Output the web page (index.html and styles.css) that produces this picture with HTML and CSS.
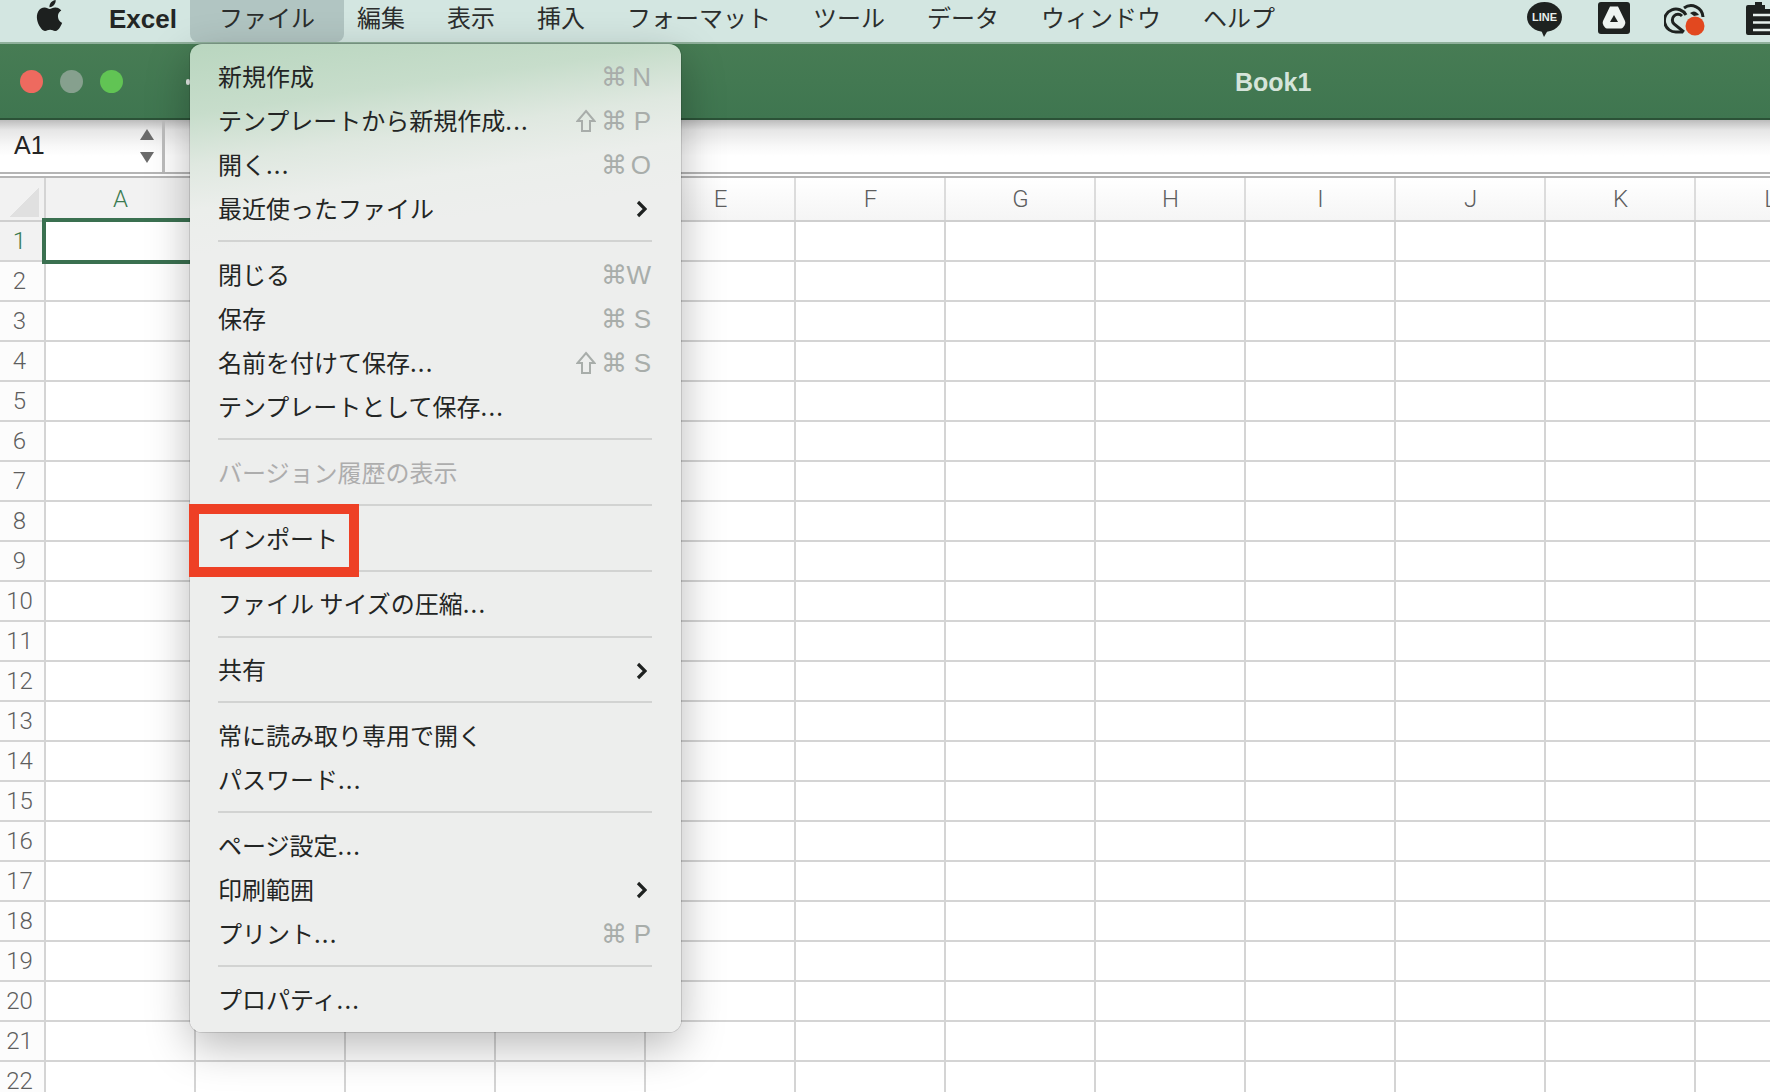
FILE: index.html
```html
<!DOCTYPE html>
<html lang="ja">
<head>
<meta charset="utf-8">
<title>Excel</title>
<link rel="stylesheet" href="styles.css">
</head>
<body>
<div class="screen">
  <header class="menubar">
    <svg class="apple" viewBox="0 0 24 24"><path d="M12.152 6.896c-.948 0-2.415-1.078-3.96-1.04-2.04.027-3.91 1.183-4.961 3.014-2.117 3.675-.546 9.103 1.519 12.09 1.013 1.454 2.208 3.09 3.792 3.039 1.52-.065 2.09-.987 3.935-.987 1.831 0 2.35.987 3.96.948 1.637-.026 2.676-1.48 3.676-2.948 1.156-1.688 1.636-3.325 1.662-3.415-.039-.013-3.182-1.221-3.22-4.857-.026-3.04 2.48-4.494 2.597-4.559-1.429-2.09-3.623-2.324-4.39-2.376-2-.156-3.675 1.09-4.61 1.09zM15.53 3.83c.843-1.012 1.4-2.427 1.245-3.83-1.207.052-2.662.805-3.532 1.818-.78.896-1.454 2.338-1.273 3.714 1.338.104 2.715-.688 3.559-1.701"/></svg>
    <span class="app-name">Excel</span>
    <nav class="menus">
      <span class="menu-title active">ファイル</span>
      <span class="menu-title">編集</span>
      <span class="menu-title">表示</span>
      <span class="menu-title">挿入</span>
      <span class="menu-title">フォーマット</span>
      <span class="menu-title">ツール</span>
      <span class="menu-title">データ</span>
      <span class="menu-title">ウィンドウ</span>
      <span class="menu-title">ヘルプ</span>
    </nav>
    <div class="status">
      <span class="line-icon"><span class="line-text">LINE</span><span class="line-tail"></span></span>
      <svg class="drive" viewBox="0 0 32 32"><rect width="32" height="32" rx="3" fill="#1e2220"/><path d="M12 4.500h8l7 14.500q1 2-.5 4.500l-1.500 2q-.8 1-2 1H9q-1.200 0-2-1l-1.500-2q-1.500-2.500-.5-4.500z" fill="#eef4f1"/><path d="M16 13l4 7h-8z" fill="#1e2220"/></svg>
      <svg class="cloud" viewBox="0 0 42 36"><g fill="none" stroke="#1e2220" stroke-width="3"><path d="M22 14A11.500 11.500 0 1 0 13 31H19"/><path d="M20 31L10 23A5.500 5.500 0 0 1 18 15"/><path d="M20 7A12 12 0 0 1 39 16"/></g><path d="M26 12Q31 8 35 14L30 15z" fill="#1e2220"/><circle cx="31" cy="25" r="9.500" fill="#e2481f"/></svg>
      <svg class="clip" viewBox="0 0 24 33"><path d="M6 3h3V0h7v3h3v4H24v26H2q-2 0-2-2V5q0-2 2-2h4z" fill="#1e2220"/><path d="M7 13h17M7 20.500h17M7 28h17" stroke="#e6efec" stroke-width="2.500"/></svg>
    </div>
  </header>

  <section class="titlebar">
    <div class="lights">
      <span class="light red"></span>
      <span class="light gray"></span>
      <span class="light green"></span>
    </div>
    <span class="toolbar-dot"></span>
    <h1 class="doc-title">Book1</h1>
  </section>

  <section class="formula">
    <div class="name-box">
      <span class="name-value">A1</span>
      <span class="spinner"><span class="up"></span><span class="down"></span></span>
    </div>
  </section>

  <section class="sheet">
    <div class="col-heads">
      <div class="corner"><span class="corner-mark"></span></div>
      <div class="col-head current">A</div>
      <div class="col-head">B</div>
      <div class="col-head">C</div>
      <div class="col-head">D</div>
      <div class="col-head">E</div>
      <div class="col-head">F</div>
      <div class="col-head">G</div>
      <div class="col-head">H</div>
      <div class="col-head">I</div>
      <div class="col-head">J</div>
      <div class="col-head">K</div>
      <div class="col-head">L</div>
    </div>
    <div class="body-area">
      <div class="row-heads">
        <div class="row-head current">1</div>
        <div class="row-head">2</div>
        <div class="row-head">3</div>
        <div class="row-head">4</div>
        <div class="row-head">5</div>
        <div class="row-head">6</div>
        <div class="row-head">7</div>
        <div class="row-head">8</div>
        <div class="row-head">9</div>
        <div class="row-head">10</div>
        <div class="row-head">11</div>
        <div class="row-head">12</div>
        <div class="row-head">13</div>
        <div class="row-head">14</div>
        <div class="row-head">15</div>
        <div class="row-head">16</div>
        <div class="row-head">17</div>
        <div class="row-head">18</div>
        <div class="row-head">19</div>
        <div class="row-head">20</div>
        <div class="row-head">21</div>
        <div class="row-head">22</div>
      </div>
      <div class="cells"><div class="selection"></div></div>
    </div>
  </section>

  <div class="dropdown">
    <div class="item"><span>新規作成</span><span class="keys"><i>⌘</i><b>N</b></span></div>
    <div class="item"><span>テンプレートから新規作成<em>...</em></span><span class="keys"><svg class="shift" viewBox="0 0 20 24"><path d="M10 2L18.500 12H14V22H6V12H1.500z"/></svg><i>⌘</i><b>P</b></span></div>
    <div class="item"><span>開く<em>...</em></span><span class="keys"><i>⌘</i><b>O</b></span></div>
    <div class="item"><span>最近使ったファイル</span><svg class="chev" viewBox="0 0 11 18"><path d="M2 2l7 7-7 7" /></svg></div>
    <div class="sep"></div>
    <div class="item"><span>閉じる</span><span class="keys"><i>⌘</i><b>W</b></span></div>
    <div class="item"><span>保存</span><span class="keys"><i>⌘</i><b>S</b></span></div>
    <div class="item"><span>名前を付けて保存<em>...</em></span><span class="keys"><svg class="shift" viewBox="0 0 20 24"><path d="M10 2L18.500 12H14V22H6V12H1.500z"/></svg><i>⌘</i><b>S</b></span></div>
    <div class="item"><span>テンプレートとして保存<em>...</em></span></div>
    <div class="sep"></div>
    <div class="item disabled"><span>バージョン履歴の表示</span></div>
    <div class="sep"></div>
    <div class="item"><span>インポート</span></div>
    <div class="sep"></div>
    <div class="item"><span>ファイル サイズの圧縮<em>...</em></span></div>
    <div class="sep"></div>
    <div class="item"><span>共有</span><svg class="chev" viewBox="0 0 11 18"><path d="M2 2l7 7-7 7" /></svg></div>
    <div class="sep"></div>
    <div class="item"><span>常に読み取り専用で開く</span></div>
    <div class="item"><span>パスワード<em>...</em></span></div>
    <div class="sep"></div>
    <div class="item"><span>ページ設定<em>...</em></span></div>
    <div class="item"><span>印刷範囲</span><svg class="chev" viewBox="0 0 11 18"><path d="M2 2l7 7-7 7" /></svg></div>
    <div class="item"><span>プリント<em>...</em></span><span class="keys"><i>⌘</i><b>P</b></span></div>
    <div class="sep"></div>
    <div class="item"><span>プロパティ<em>...</em></span></div>
    <div class="callout"></div>
  </div>
</div>
</body>
</html>
```
FILE: styles.css
```css
* { box-sizing: border-box; }
html, body { margin: 0; padding: 0; }
body { background: #fff; font-family: "Noto Sans CJK JP", "Liberation Sans", sans-serif; }
.screen { position: relative; width: 1770px; height: 1092px; overflow: hidden; }

/* menu bar */
.menubar { display: flex; align-items: center; height: 44px; padding-left: 38px; background: #d3e6e1; border-bottom: 2px solid #8fb09b; color: #1f2221; position: relative; }
.apple { width: 31px; height: 33px; margin: -11px 0 0 -4px; flex: none; fill: #1d201f; }
.app-name { font: bold 26px "Liberation Sans", sans-serif; margin: 0 0 4px 44px; color: #232625; width: 81px; }
.menus { display: flex; align-self: stretch; }
.menu-title { display: flex; align-items: center; padding: 0 21px 9px; font-size: 24px; line-height: 1; white-space: nowrap; color: #2b2e2d; }
.menu-title.active { padding: 0 29px 9px; margin-right: -8px; background: #b1c5c2; border-radius: 0 0 8px 8px; height: 42px; }
.status { margin-left: auto; display: flex; align-items: flex-start; align-self: flex-start; }
.line-icon { position: relative; width: 35px; height: 30px; margin-top: 2px; margin-right: 36px; background: #1e2220; border-radius: 50%; display: flex; align-items: center; justify-content: center; }
.line-text { font: bold 11px "Liberation Sans", sans-serif; color: #e8efec; }
.line-tail { position: absolute; left: 14px; bottom: -5px; border-left: 3px solid transparent; border-right: 4px solid transparent; border-top: 7px solid #1e2220; }
.drive { width: 32px; height: 32px; margin-top: 2px; margin-right: 34px; }
.cloud { width: 42px; height: 36px; margin-top: 1px; margin-right: 40px; }
.clip { width: 24px; height: 33px; margin-top: 2px; flex: none; }

/* title bar */
.titlebar { position: relative; display: flex; align-items: center; height: 76px; padding: 2px 0 0 20px; background: linear-gradient(#477c54, #3f7650); border-bottom: 2px solid #2b5237; }
.lights { display: flex; gap: 17px; margin-bottom: 1px; }
.light { width: 23px; height: 23px; border-radius: 50%; }
.red { background: #ee6a5f; }
.gray { background: #86a08e; }
.green { background: #61c454; }
.toolbar-dot { width: 4px; height: 6px; margin-left: 63px; background: #e6ebe7; border-radius: 2px; }
.doc-title { margin: 0 0 0 1045px; font: bold 25px "Liberation Sans", sans-serif; color: #d5e4da; }

/* formula bar */
.formula { display: flex; height: 52px; background: linear-gradient(#bcbcbc, #e6e6e6 10px, #f8f8f8 26px, #fff 36px); }
.name-box { display: flex; align-items: center; justify-content: space-between; width: 165px; height: 52px; padding: 0 8px 0 14px; border-right: 3px solid #bdbdbd; }
.name-value { font: 25px "Liberation Sans", sans-serif; color: #242424; margin-bottom: 2px; }
.spinner { display: flex; flex-direction: column; gap: 12px; }
.up, .down { width: 0; height: 0; border-left: 7px solid transparent; border-right: 7px solid transparent; }
.up { border-bottom: 11px solid #6b6b6b; }
.down { border-top: 11px solid #6b6b6b; }

/* sheet */
.sheet { border-top: 2px solid #b5b5b5; padding-top: 2px; }
.col-heads { display: flex; height: 46px; background: linear-gradient(#fff, #f5f5f5); border-top: 2px solid #b5b5b5; border-bottom: 2px solid #cfcfcf; overflow: hidden; }
.corner { flex: none; display: flex; justify-content: flex-end; align-items: flex-end; width: 46px; padding: 0 5px 3px 0; border-right: 2px solid #d4d4d4; background: #f2f2f2; }
.corner-mark { width: 29px; height: 30px; background: linear-gradient(to bottom right, transparent 50%, #e0e0e0 50%); }
.col-head { flex: none; display: flex; justify-content: center; align-items: center; width: 150px; padding-left: 1px; border-right: 2px solid #dcdcdc; font: 300 24px Roboto, "Liberation Sans", sans-serif; color: #5e5e5e; }
.col-head.current { color: #3a7a50; background: #f2f2f2; }
.body-area { display: flex; }
.row-heads { flex: none; width: 46px; border-right: 2px solid #d4d4d4; background: repeating-linear-gradient(#fcfcfc 0 38px, #d4d4d4 38px 40px); }
.row-head { height: 40px; padding: 0 5px 2px 0; display: flex; align-items: center; justify-content: center; font: 300 24px Roboto, "Liberation Sans", sans-serif; color: #5e5e5e; }
.row-head.current { color: #3a7a50; background: linear-gradient(#f2f2f2 38px, transparent 38px); }
.cells { position: relative; flex: 1; height: 880px; background-image: linear-gradient(to right, transparent 148px, #d4d4d4 148px), linear-gradient(transparent 38px, #d4d4d4 38px); background-size: 150px 40px; }
.selection { position: absolute; left: -4px; top: -4px; width: 152px; height: 46px; border: 4px solid #3a7050; background: #fff; }

/* dropdown */
.dropdown { position: absolute; left: 190px; top: 44px; width: 491px; height: 988px; padding: 11px 29px 0 28px; border-radius: 12px; background: linear-gradient(172deg, #b9d6bf 0, #c7ddcb 70px, #dfe8e0 120px, #ebeeeb 165px, #edeeed 210px); box-shadow: 0 0 0 1px rgba(0,0,0,.12), 0 14px 44px rgba(0,0,0,.28); font-size: 24px; color: #232524; }
.item { display: flex; align-items: center; justify-content: space-between; height: 44.100px; line-height: 1; white-space: nowrap; }
.item > span:first-child { margin-bottom: 2.500px; }
.item em { font-style: normal; letter-spacing: 1.200px; }
.item.disabled { color: #adadad; }
.sep { height: 21.700px; display: flex; align-items: center; padding-bottom: 2px; }
.sep::before { content: ""; display: block; width: 100%; height: 2px; background: #d2d3d2; }
.keys { display: flex; align-items: center; gap: 5px; margin-right: 1px; color: #a8adaa; font: 26px "Liberation Sans", "DejaVu Sans", sans-serif; }
.keys i { font: normal 26px "DejaVu Sans", sans-serif; margin-right: -1px; }
.keys b { display: flex; justify-content: flex-end; font-weight: normal; width: 20px; }
.shift { width: 20px; height: 24px; fill: none; stroke: #a8adaa; stroke-width: 2; }
.chev { width: 11px; height: 18px; margin-right: 5px; fill: none; stroke: #1e2120; stroke-width: 3.200; }
.callout { position: absolute; left: -1px; top: 460px; width: 170px; height: 73px; border: 10px solid #ee4025; }
```
